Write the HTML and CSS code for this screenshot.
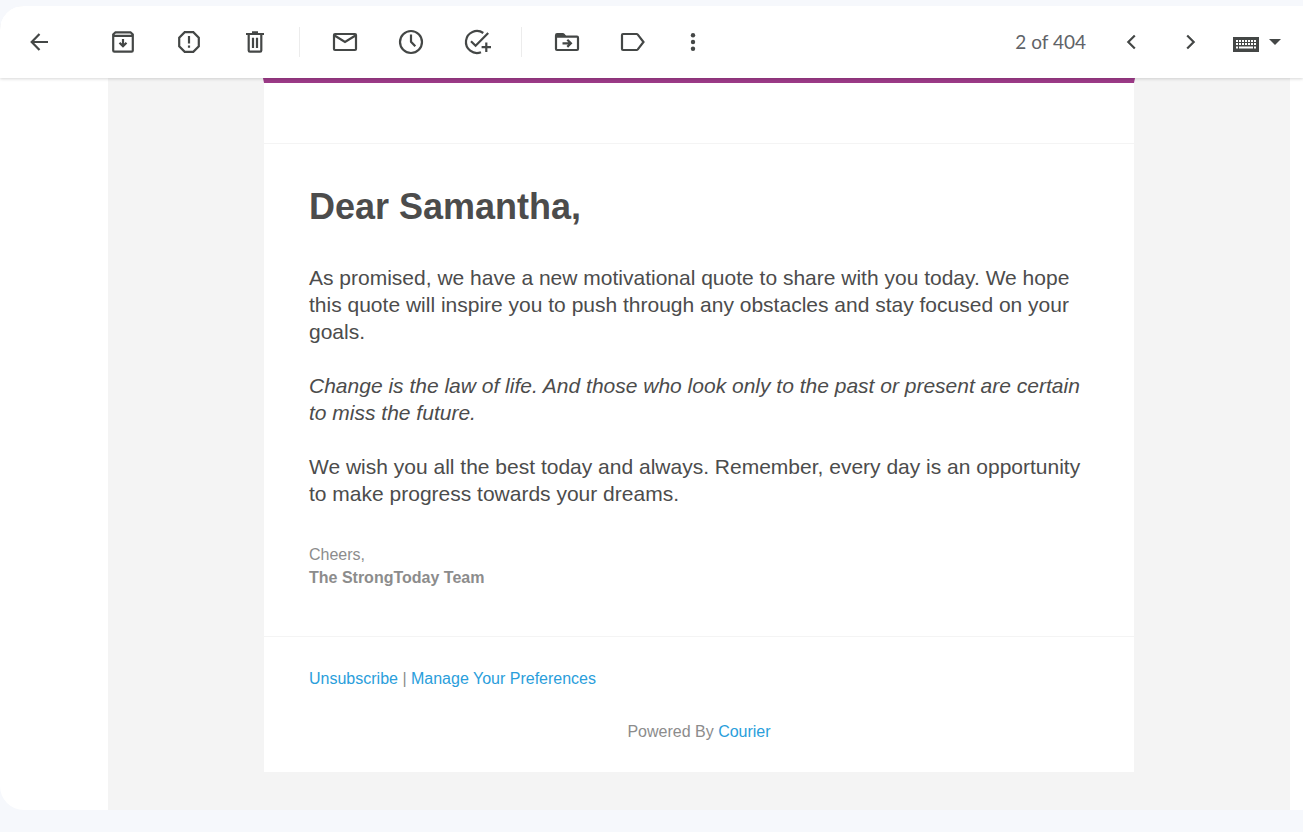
FILE: index.html
```html
<!DOCTYPE html>
<html lang="en">
  <head>
    <meta charset="utf-8" />
    <title>Mail</title>
    <meta name="viewport" content="width=device-width,initial-scale=1" />
    <link rel="stylesheet" href="styles.css">
  </head>

  <body>
    <main class="panel">
      <header class="toolbar">
        <button class="icon-button back" aria-label="Back to inbox">
          <svg viewBox="0 0 30 30"><path d="M24 15H8M15.500 7L7.700 15l7.800 8"/></svg>
        </button>

        <div class="group">
          <button class="icon-button" aria-label="Archive">
            <svg viewBox="0 0 30 30"><path d="M5.200 8.800V7.500L7.500 5.300h15l2.300 2.200v16q0 1.200-1.200 1.200H6.400q-1.200 0-1.200-1.200V8.800h19.600M15 12v7.500M11.500 15.800l3.500 3.500 3.500-3.500"/></svg>
          </button>
          <button class="icon-button" aria-label="Report spam">
            <svg viewBox="0 0 30 30"><path d="M10.700 5.200h8.600l5.500 5.500v8.600l-5.500 5.500h-8.600l-5.500-5.500v-8.600zM15 9v7.500M15 18.500v2.200"/></svg>
          </button>
          <button class="icon-button" aria-label="Delete">
            <svg viewBox="0 0 30 30"><path d="M6 7h18M12 5.300h6M8.700 7v16.500q0 1.200 1.200 1.200h10.200q1.200 0 1.200-1.200V7M13 10.700V21M17 10.700V21"/></svg>
          </button>
        </div>

        <div class="group">
          <button class="icon-button" aria-label="Mark as unread">
            <svg viewBox="0 0 30 30"><rect x="4" y="7" width="22" height="16" rx="1"/><path d="M4.500 8.500L15 15l10.500-6.500"/></svg>
          </button>
          <button class="icon-button" aria-label="Snooze">
            <svg viewBox="0 0 30 30"><circle cx="15" cy="15" r="11"/><path d="M15 7.500v7.300l4.300 4.500"/></svg>
          </button>
          <button class="icon-button" aria-label="Add to tasks">
            <svg viewBox="0 0 30 30"><path d="M21.300 6A11 11 0 1 0 19 25.200M9 14.200l4.600 4.500L26.200 6M24.300 15.500V25M19.600 20.200H29"/></svg>
          </button>
        </div>

        <div class="group">
          <button class="icon-button" aria-label="Move to">
            <svg viewBox="0 0 30 30"><path d="M4 9.700h21q1 0 1 1V22q0 1-1 1H5q-1 0-1-1zM10.500 16.300h8M15.300 12.700l3.600 3.600-3.600 3.600"/><path class="solid" d="M3 10V8q0-2 2-2h5.500q1.500 0 2.200 1l2.300 3z"/></svg>
          </button>
          <button class="icon-button" aria-label="Labels">
            <svg viewBox="0 0 30 30"><path d="M5 7h13.500q.8 0 1.300.6L25.500 15l-5.700 7.400q-.5.600-1.300.6H5q-1 0-1-1V8q0-1 1-1z"/></svg>
          </button>
          <button class="icon-button more" aria-label="More">
            <svg viewBox="0 0 30 30"><g class="solid"><circle cx="15" cy="8.300" r="2.200"/><circle cx="15" cy="15" r="2.200"/><circle cx="15" cy="21.700" r="2.200"/></g></svg>
          </button>
        </div>

        <div class="pager">
          <span class="count">2 of 404</span>
          <button class="icon-button" aria-label="Newer">
            <svg viewBox="0 0 30 30"><path d="M18.800 8.500L12.300 15l6.500 6.500"/></svg>
          </button>
          <button class="icon-button" aria-label="Older">
            <svg viewBox="0 0 30 30"><path d="M11.200 8.500l6.500 6.500-6.500 6.500"/></svg>
          </button>
        </div>

        <button class="input-tools" aria-label="Select input tool">
          <svg class="keyboard" viewBox="0 0 26 19">
            <path d="M0 4h26v15H0z"/>
            <path class="keys" d="M3 8h20M3 11h20M3 14.500h2M21 14.500h2"/>
            <path class="space" d="M6 14.500h14"/>
          </svg>
          <svg class="caret" viewBox="0 0 12 6"><path d="M0 0h12L6 6z"/></svg>
        </button>
      </header>

      <div class="message">
        <article class="card">
          <div class="card-header"></div>

          <div class="card-body">
            <h1>Dear Samantha,</h1>
            <p>As promised, we have a new motivational quote to share with you today. We hope this quote will inspire you to push through any obstacles and stay focused on your goals.</p>
            <p><em>Change is the law of life. And those who look only to the past or present are certain to miss the future.</em></p>
            <p>We wish you all the best today and always. Remember, every day is an opportunity to make progress towards your dreams.</p>
            <p class="signature">Cheers,<br><strong>The StrongToday Team</strong></p>
          </div>

          <footer class="card-footer">
            <p><a href="#">Unsubscribe</a> | <a href="#">Manage Your Preferences</a></p>
            <p class="powered">Powered By <a href="#">Courier</a></p>
          </footer>
        </article>
      </div>
    </main>
  </body>
</html>
```
FILE: styles.css
```css
* {
  box-sizing: border-box;
}

body {
  margin: 0;
  padding: 6px 0 22px;
  min-height: 100vh;
  display: flex;
  background: #f6f8fc;
  font-family: "Liberation Sans", Arial, Helvetica, sans-serif;
  color: #4c4c4c;
}

.panel {
  flex: 1;
  display: flex;
  flex-direction: column;
  background: white;
  border-radius: 24px 0 0 24px;
  overflow: hidden;
}

/* Toolbar */
.toolbar {
  position: relative;
  display: flex;
  align-items: center;
  height: 72px;
  padding: 0 22px 0 24px;
  background: white;
  box-shadow: 0 1px 3px rgba(0, 0, 0, 0.16);
}

button {
  padding: 0;
  border: none;
  background: none;
  cursor: pointer;
}

.icon-button {
  width: 30px;
  height: 30px;
}

.icon-button svg {
  display: block;
  width: 30px;
  height: 30px;
  fill: none;
  stroke: #444746;
  stroke-width: 2.2;
}

.icon-button .solid {
  fill: #444746;
  stroke: none;
}

.back {
  margin-right: 54px;
}

.group {
  display: flex;
  gap: 36px;
}

.group + .group {
  height: 30px;
  margin-left: 29px;
  padding-left: 30px;
  border-left: 1px solid #ececec;
}

.more {
  margin-left: -6px;
}

.pager {
  display: flex;
  align-items: center;
  gap: 30px;
  margin-left: auto;
}

.count {
  font-family: Lato, sans-serif;
  font-size: 19px;
  line-height: 24px;
  color: #5f6368;
}

.input-tools {
  display: flex;
  align-items: center;
  gap: 10px;
  margin-left: 27px;
}

.keyboard {
  width: 26px;
  height: 19px;
  fill: #444746;
}

.keys,
.space {
  fill: none;
  stroke: white;
  stroke-width: 2;
}

.keys {
  stroke-dasharray: 2 1;
}

.caret {
  width: 12px;
  height: 6px;
  fill: #444746;
}

/* Message */
.message {
  flex: 1;
  margin: 0 13px 0 108px;
  padding-bottom: 38px;
  background: #f4f4f4;
}

.card {
  max-width: 870px;
  margin: 0 auto;
  background: white;
}

.card-header {
  height: 66px;
  margin: 0 -1px;
  border: 1px solid transparent;
  border-top: 5px solid #9c3a87;
  border-bottom-color: #f4f4f4;
}

.card-body {
  padding: 42px 45px 47px;
  border-bottom: 1px solid #f4f4f4;
}

.card-body h1 {
  margin: 0 0 36px;
  font-size: 36px;
  line-height: 42px;
}

.card-body p {
  margin: 0 0 27px;
  font-size: 21px;
  line-height: 27px;
}

.card-body .signature {
  margin: 36px 0 0;
  font-size: 16px;
  line-height: 23px;
  color: #8c8c8c;
}

.card-footer {
  padding: 30px 45px 29px;
  font-size: 16px;
  line-height: 23px;
  color: #8c8c8c;
}

.card-footer p {
  margin: 0;
}

.card-footer .powered {
  margin-top: 30px;
  text-align: center;
}

a {
  color: #2a9edb;
  text-decoration: none;
}
```
